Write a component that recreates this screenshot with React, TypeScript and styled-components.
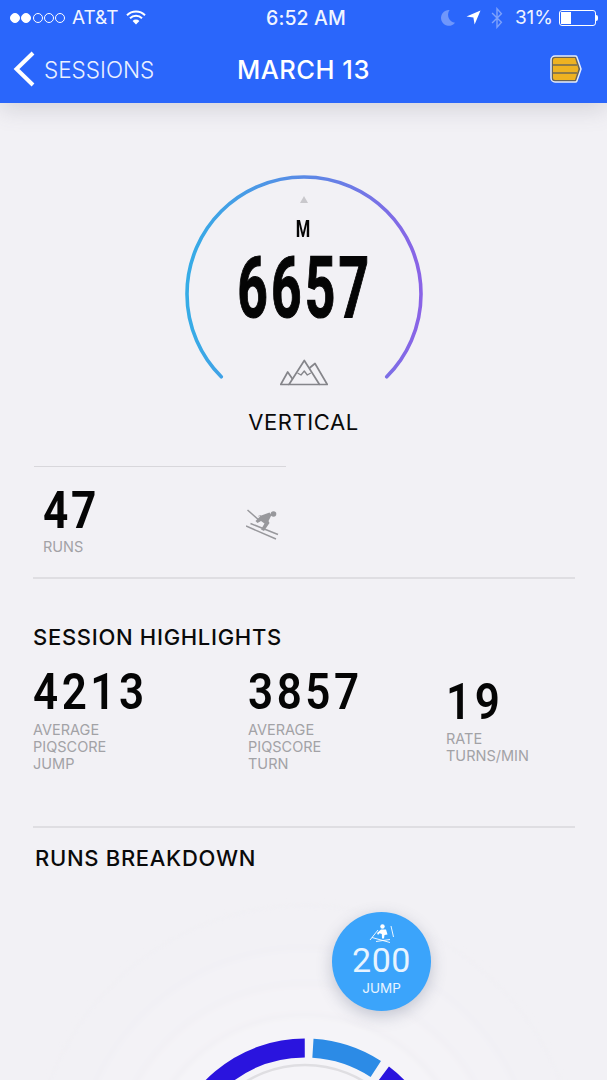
import React from 'react';
import styled, { createGlobalStyle } from 'styled-components';

const GlobalStyle = createGlobalStyle`
  html, body {
    margin: 0;
    padding: 0;
    background: #f2f1f5;
  }
  #root {
    height: 1080px;
    overflow: hidden;
  }
`;

const arcPath = (cx: number, cy: number, r: number, from: number, to: number) => {
  const point = (deg: number) => {
    const rad = (deg * Math.PI) / 180;
    return `${(cx + r * Math.sin(rad)).toFixed(2)} ${(cy - r * Math.cos(rad)).toFixed(2)}`;
  };
  const large = Math.abs(to - from) > 180 ? 1 : 0;
  const sweep = to > from ? 1 : 0;
  return `M ${point(from)} A ${r} ${r} 0 ${large} ${sweep} ${point(to)}`;
};

function Main() {
  return (
    <Page>
      <GlobalStyle />
      <Header>
        <StatusBar>
          <StatusLeft>
            <Dots>
              <Dot $on />
              <Dot $on />
              <Dot />
              <Dot />
              <Dot />
            </Dots>
            <span>AT&amp;T</span>
            <svg width="20" height="15" viewBox="0 0 20 15">
              <path d="M1 5.2a13 13 0 0 1 18 0" fill="none" stroke="#fff" strokeWidth="2" />
              <path d="M4 8.2a8.6 8.6 0 0 1 12 0" fill="none" stroke="#fff" strokeWidth="2" />
              <path d="M10 14.5 6.6 11a4.8 4.8 0 0 1 6.8 0z" fill="#fff" />
            </svg>
          </StatusLeft>
          <StatusTime>6:52 AM</StatusTime>
          <StatusRight>
            <svg width="16" height="17" viewBox="0 0 14 16">
              <path d="M8.5 1A7.4 7.4 0 1 0 13.6 13 7.6 7.6 0 0 1 8.5 1z" fill="#6f97fb" />
            </svg>
            <svg width="15" height="15" viewBox="0 0 15 15">
              <path d="M14.5.5 8.6 14.5 7.4 7.6.5 6.4z" fill="#fff" />
            </svg>
            <svg width="12" height="22" viewBox="0 0 11 20">
              <path d="M1 5.5 9.5 14 5.5 18.5V1.5L9.5 6 1 14.5" fill="none" stroke="#7ea2fb" strokeWidth="1.3" />
            </svg>
            <BatteryText>31%</BatteryText>
            <Battery>
              <BatteryLevel $level={31} />
            </Battery>
          </StatusRight>
        </StatusBar>
        <NavBar>
          <BackLink>
            <svg width="22" height="36" viewBox="0 0 22 36">
              <path d="M20 2 3.500 18 20 34" fill="none" stroke="#fff" strokeWidth="4" />
            </svg>
            <span>SESSIONS</span>
          </BackLink>
          <NavTitle>MARCH 13</NavTitle>
          <NavAction>
            <svg width="32" height="28" viewBox="0 0 32 28">
              <path d="M5 1h20.500a1.500 1.500 0 0 1 1.300.8L31 14l-4.200 12.200a1.500 1.500 0 0 1-1.300.8H5a4 4 0 0 1-4-4V5a4 4 0 0 1 4-4z" fill="#66635a" stroke="#e6edfd" strokeWidth="1.500" />
              <path d="M5 3h20l3.500 11L25 25H5a2 2 0 0 1-2-2V5a2 2 0 0 1 2-2z" fill="#eeb221" />
              <path d="M3 10h24M3 18h24" stroke="#6f6a56" strokeWidth="1.600" />
            </svg>
          </NavAction>
        </NavBar>
      </Header>

      <Content>
        <GaugeSection>
          <Gauge>
            <GaugeArc viewBox="0 0 238 212" width="238" height="212">
              <defs>
                <linearGradient id="gaugeStroke" x1="0" y1="0" x2="1" y2="0">
                  <stop offset="0" stopColor="#36ace6" />
                  <stop offset="0.5" stopColor="#5a8ae6" />
                  <stop offset="1" stopColor="#8a63e6" />
                </linearGradient>
              </defs>
              <path d={arcPath(119, 119, 117, -135, 135)} fill="none" stroke="url(#gaugeStroke)" strokeWidth="3.6" strokeLinecap="round" />
            </GaugeArc>
            <Pointer />
            <GaugeUnit>M</GaugeUnit>
            <GaugeValue>6657</GaugeValue>
            <svg width="48" height="27" viewBox="0 0 48 27">
              <g fill="none" stroke="#85858a" strokeWidth="1.700" strokeLinejoin="round">
                <path d="M9 25.500 24.300 1.500 39.500 25.500z" />
                <path d="M12.500 20 7.700 13 .7 25.500H9" />
                <path d="M29.500 9 35 4.500 47.300 25.500H39.500" />
                <path d="M17.500 14l3.500 2 3.300-4 3 4 3.500-2" strokeWidth="1.300" />
              </g>
            </svg>
          </Gauge>
          <GaugeLabel>VERTICAL</GaugeLabel>
        </GaugeSection>

        <ShortRule />
        <RunsRow>
          <div>
            <RunsValue>47</RunsValue>
            <StatLabel>RUNS</StatLabel>
          </div>
          <svg width="33" height="32" viewBox="0 0 33 32">
            <g fill="#98989c">
              <circle cx="27.500" cy="6" r="2.800" />
              <path d="M12.500 8.500 23.500 4.500l2 2.500-3 6 1 2-5.500 8-3-1.500 3.500-6-3.500-2.500-3.500 2-2-2 4-4 1.500-2-3 1z" />
            </g>
            <g fill="none" stroke="#98989c" strokeWidth="1.500">
              <path d="M1.500 2 14 13" />
              <path d="M0 18 30 31M4.500 15.500 32 26.500" />
            </g>
          </svg>
        </RunsRow>
        <Rule $top={22} />

        <SectionTitle $top={46}>SESSION HIGHLIGHTS</SectionTitle>
        <Highlights>
          <Highlight>
            <HighlightValue>4213</HighlightValue>
            <StatLabel>AVERAGE<br />PIQSCORE<br />JUMP</StatLabel>
          </Highlight>
          <Highlight>
            <HighlightValue>3857</HighlightValue>
            <StatLabel>AVERAGE<br />PIQSCORE<br />TURN</StatLabel>
          </Highlight>
          <Highlight $offset={10}>
            <HighlightValue $gap={10}>19</HighlightValue>
            <StatLabel>RATE<br />TURNS/MIN</StatLabel>
          </Highlight>
        </Highlights>
        <Rule $top={54} />

        <SectionTitle $top={18} $indent={2}>RUNS BREAKDOWN</SectionTitle>
        <Chart>
          <ChartRings viewBox="0 0 607 210" width="607" height="210">
            <defs>
              <filter id="softRing" x="-20%" y="-20%" width="140%" height="140%">
                <feGaussianBlur stdDeviation="2.500" />
              </filter>
            </defs>
            <g filter="url(#softRing)">
              <circle cx="305" cy="308" r="273" fill="#f2f1f5" stroke="#f0eff3" strokeWidth="2" />
              <circle cx="305" cy="308" r="230" fill="#f3f2f6" stroke="#efeef2" strokeWidth="2" />
              <circle cx="305" cy="308" r="194" fill="#f4f3f7" stroke="#eeedf1" strokeWidth="2" />
              <circle cx="305" cy="308" r="163" fill="#f5f4f8" stroke="#edecf0" strokeWidth="2" />
            </g>
            <path d={arcPath(305, 308, 130, -0.1, -80)} fill="none" stroke="#2a14de" strokeWidth="19" />
            <path d={arcPath(305, 308, 130, 3.5, 33)} fill="none" stroke="#2c8be6" strokeWidth="19" />
            <path d={arcPath(305, 308, 130, 37, 80)} fill="none" stroke="#2a14de" strokeWidth="19" />
            <circle cx="305" cy="308" r="113" fill="#f5f4f8" stroke="#dfdee2" strokeWidth="2.500" />
          </ChartRings>
          <Bubble>
            <svg width="26" height="20" viewBox="0 0 26 20">
              <circle cx="13.500" cy="2.500" r="2.200" fill="#fff" />
              <path d="M8 9l4-3.500h5l1.500 5-3 .5-.5 3.500h-2l-.2-4.500-2.300-.8-1.500 1.800z" fill="#fff" />
              <path d="M1 16 9 6M22 2l2.500 11M3 13.500l18 5M7 17.500l14-2" fill="none" stroke="#fff" strokeWidth="0.9" />
            </svg>
            <BubbleValue>200</BubbleValue>
            <BubbleLabel>JUMP</BubbleLabel>
          </Bubble>
        </Chart>
      </Content>
    </Page>
  );
}

export default Main;

const Page = styled.div`
  width: 607px;
  height: 1080px;
  overflow: hidden;
  background: #f2f1f5;
  font-family: Inter, "Liberation Sans", sans-serif;
`;

const Header = styled.header`
  height: 103px;
  background: #2a66fb;
  color: #fff;
  box-shadow: 0 6px 22px rgba(90, 90, 110, 0.2);
  position: relative;
  z-index: 1;
`;

const StatusBar = styled.div`
  height: 35px;
  display: grid;
  grid-template-columns: 256px auto 1fr;
  align-items: center;
  padding: 0 9px 0 10px;
  font-size: 19px;
  color: #f0f4ff;
`;

const StatusLeft = styled.div`
  display: flex;
  align-items: center;
  gap: 7px;
`;

const Dots = styled.div`
  display: flex;
  gap: 1.250px;
`;

const Dot = styled.i<{ $on?: boolean }>`
  width: 10px;
  height: 10px;
  box-sizing: border-box;
  border-radius: 50%;
  border: 1px solid #fff;
  background: ${p => (p.$on ? '#fff' : 'transparent')};
`;

const StatusTime = styled.div`
  font-size: 19.500px;
  font-weight: 500;
  letter-spacing: 0.1px;
`;

const StatusRight = styled.div`
  display: flex;
  align-items: center;
  justify-content: flex-end;
  gap: 10px;
`;

const BatteryText = styled.span`
  margin-left: 2px;
  margin-right: -4px;
`;

const Battery = styled.div`
  position: relative;
  width: 37px;
  height: 16px;
  margin-right: 2px;
  box-sizing: border-box;
  border: 1px solid #fff;
  border-radius: 3px;
  padding: 1px;

  &::after {
    content: '';
    position: absolute;
    right: -3px;
    top: 4px;
    width: 2px;
    height: 6px;
    background: #fff;
    border-radius: 0 2px 2px 0;
  }
`;

const BatteryLevel = styled.div<{ $level: number }>`
  width: ${p => p.$level}%;
  height: 100%;
  background: #fff;
`;

const NavBar = styled.nav`
  height: 68px;
  display: grid;
  grid-template-columns: 224px auto 1fr;
  align-items: center;
  padding: 0 25px 2px 13px;
`;

const BackLink = styled.div`
  display: flex;
  align-items: center;
  gap: 9px;
  font-size: 22.500px;
  font-weight: 300;
  color: #eaf0ff;
`;

const NavTitle = styled.div`
  font-size: 25.500px;
  font-weight: 500;
  letter-spacing: 0.5px;
`;

const NavAction = styled.div`
  display: flex;
  justify-content: flex-end;
`;

const Content = styled.main`
  padding: 72px 32px 0 33px;
`;

const GaugeSection = styled.section`
  display: flex;
  flex-direction: column;
  align-items: center;
  padding-right: 1px;
`;

const Gauge = styled.div`
  position: relative;
  width: 238px;
  height: 212px;
  display: flex;
  flex-direction: column;
  align-items: center;
`;

const GaugeArc = styled.svg`
  position: absolute;
  top: 0;
  left: 0;
`;

const Pointer = styled.div`
  width: 0;
  height: 0;
  margin-top: 21px;
  border-left: 4.500px solid transparent;
  border-right: 4.500px solid transparent;
  border-bottom: 7px solid #c9c8cc;
`;

const Condensed = styled.div`
  font-family: Roboto, "Liberation Sans", sans-serif;
  font-weight: 700;
  color: #050505;
`;

const GaugeUnit = styled(Condensed)`
  margin-top: 15px;
  font-size: 23px;
  line-height: 24px;
  transform: scaleX(0.72);
`;

const GaugeValue = styled(Condensed)`
  margin: 8px 0 33px;
  padding-left: 5px;
  font-size: 86px;
  line-height: 76px;
  letter-spacing: 5px;
  -webkit-text-stroke: 1.2px #050505;
  transform: scaleX(0.62);
  transform-origin: center;
`;

const GaugeLabel = styled.div`
  margin-top: 23px;
  font-size: 22px;
  line-height: 24px;
  font-weight: 400;
  letter-spacing: 0.6px;
  color: #0a0a0a;
`;

const ShortRule = styled.hr`
  width: 252px;
  height: 1px;
  margin: 32px 0 0 1px;
  border: 0;
  background: #d8d7db;
`;

const Rule = styled.hr<{ $top?: number }>`
  height: 2px;
  margin: ${p => p.$top ?? 21}px 0 0;
  border: 0;
  background: #dfdee2;
`;

const RunsRow = styled.div`
  width: 236px;
  margin: 25px 0 0 10px;
  display: flex;
  justify-content: space-between;
  align-items: center;
`;

const RunsValue = styled(Condensed)`
  font-size: 52px;
  line-height: 37px;
  margin-bottom: 9px;
  letter-spacing: 3px;
  transform: scaleX(0.85);
  transform-origin: left;
`;

const StatLabel = styled.div`
  font-size: 14.500px;
  line-height: 17px;
  color: #a2a2a6;
`;

const SectionTitle = styled.h2<{ $top: number; $indent?: number }>`
  margin: ${p => p.$top}px 0 0 ${p => p.$indent ?? 0}px;
  font-size: 22px;
  line-height: 24px;
  font-weight: 500;
  letter-spacing: 0.7px;
  color: #0a0a0a;
`;

const Highlights = styled.div`
  margin-top: 25px;
  display: grid;
  grid-template-columns: 215px 198px 1fr;
`;

const Highlight = styled.div<{ $offset?: number }>`
  padding-top: ${p => p.$offset ?? 0}px;
`;

const HighlightValue = styled(Condensed)<{ $gap?: number }>`
  font-size: 50px;
  font-weight: 600;
  line-height: 36px;
  letter-spacing: 4px;
  margin-bottom: ${p => p.$gap ?? 11}px;
  transform: scaleX(0.88);
  transform-origin: left;
`;

const Chart = styled.div`
  position: relative;
  height: 210px;
  margin: 0 -32px 0 -33px;
`;

const ChartRings = styled.svg`
  position: absolute;
  top: 0;
  left: 0;
  overflow: visible;
`;

const Bubble = styled.div`
  position: absolute;
  top: 42px;
  left: 332px;
  width: 99px;
  height: 99px;
  box-sizing: border-box;
  padding-top: 12px;
  border-radius: 50%;
  background: #3ba4fb;
  box-shadow: 0 5px 16px rgba(80, 90, 120, 0.3);
  color: #e8f4ff;
  display: flex;
  flex-direction: column;
  align-items: center;
`;

const BubbleValue = styled.div`
  margin-top: -4px;
  font-family: Roboto, "Liberation Sans", sans-serif;
  font-size: 34px;
  line-height: 40px;
  letter-spacing: 0.5px;
`;

const BubbleLabel = styled.div`
  font-size: 13.500px;
  line-height: 16px;
`;
